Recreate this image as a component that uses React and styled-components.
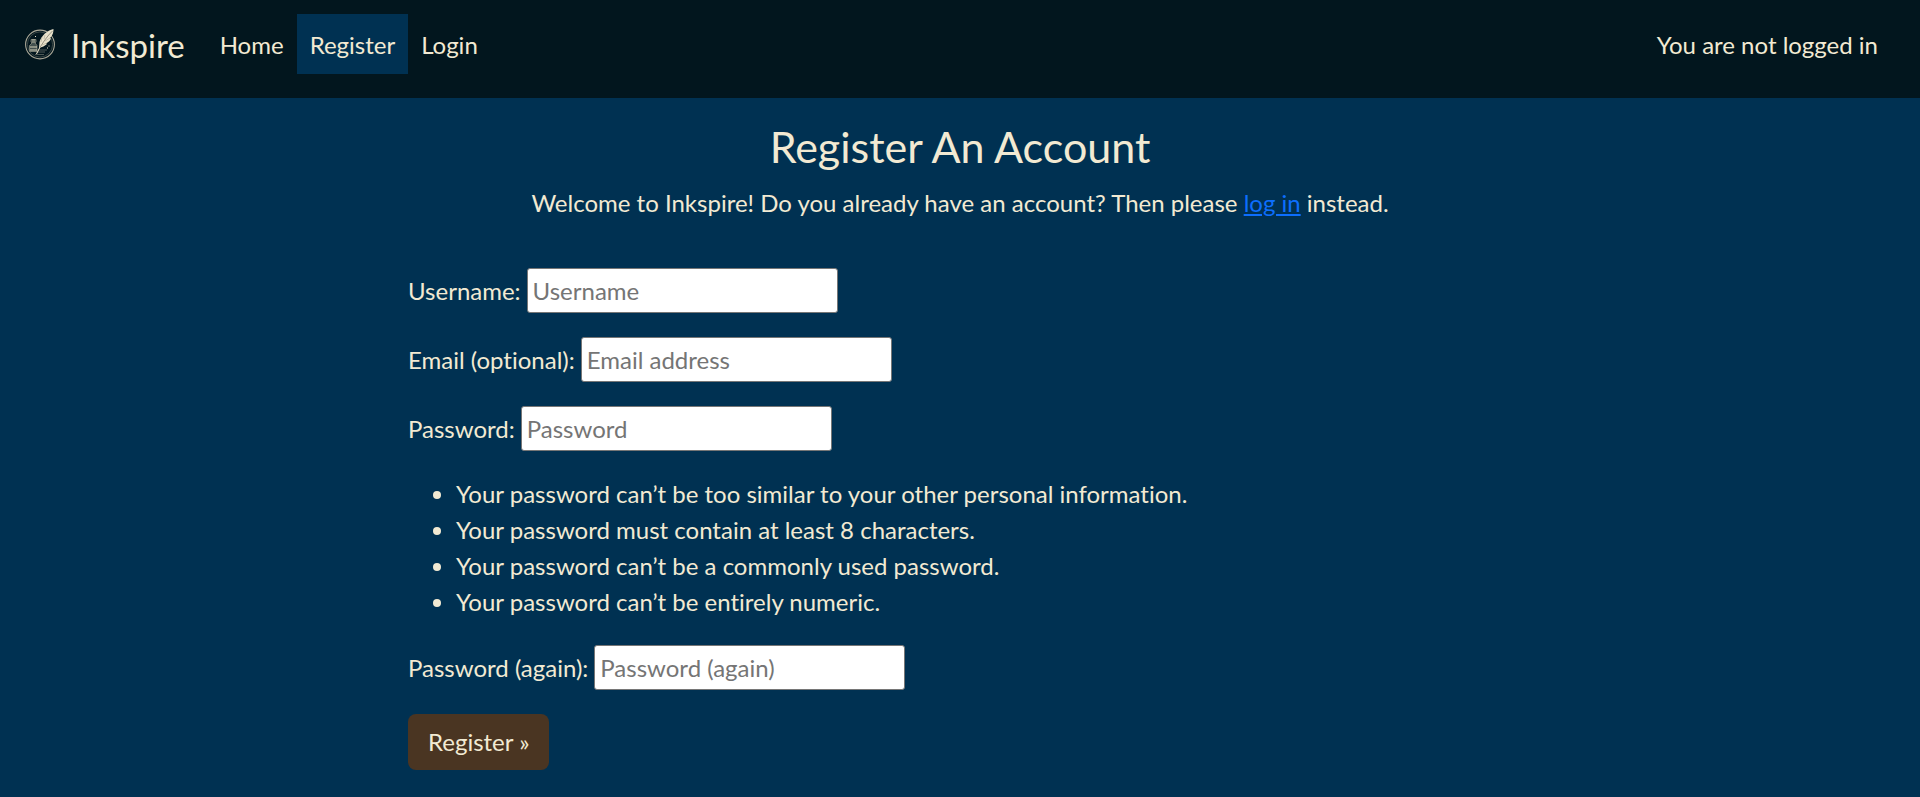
import React from "react";
import styled, { createGlobalStyle } from "styled-components";

const GlobalStyle = createGlobalStyle`
  *, *::before, *::after { box-sizing: border-box; }
  body {
    margin: 0;
    background: #003152;
    color: #f2ead3;
    font-family: Lato, "Liberation Sans", sans-serif;
    font-size: 24px;
    line-height: 36px;
    font-variant-ligatures: none;
  }
`;

const Navbar = styled.header`
  display: flex;
  align-items: flex-start;
  background: #02161e;
  padding: 14px 42px 24px 24px;
`;

const Brand = styled.a`
  display: flex;
  align-items: center;
  gap: 15px;
  height: 60px;
  margin-right: 22px;
  color: inherit;
  text-decoration: none;
  font-size: 33px;
`;

const BrandName = styled.span`
  padding-top: 2px;
`;

const Logo = styled.svg`
  width: 32px;
  height: 32px;
`;

const Nav = styled.nav`
  display: flex;
  flex: 1;
`;

const NavLink = styled.a`
  padding: 13px 13px 11px;
  color: inherit;
  text-decoration: none;
  background: ${(p) => (p.$active ? "#003152" : "transparent")};
`;

const LoginStatus = styled.span`
  padding: 13px 0 11px;
`;

const Main = styled.main`
  max-width: 1104px;
  margin: 0 auto;
  padding: 23px 0;
`;

const Intro = styled.section`
  text-align: center;
  margin-bottom: 47px;
`;

const Title = styled.h1`
  margin: 0 0 12px;
  font-size: 43px;
  line-height: 52px;
  font-weight: 400;
`;

const Text = styled.p`
  margin: 0;
`;

const TextLink = styled.a`
  color: #0d6efd;
`;

const Form = styled.form`
  display: flex;
  flex-direction: column;
  align-items: flex-start;
  gap: 24px;
`;

const Field = styled.div`
  display: flex;
  align-items: center;
  gap: 6px;
`;

const Input = styled.input`
  width: 311px;
  height: 45px;
  padding: 1px 5px;
  border: 1px solid #767676;
  border-radius: 3px;
  background: #fff;
  color: #212529;
  font: inherit;
  &::placeholder { color: #757575; opacity: 1; }
`;

const Rules = styled.ul`
  margin: 0;
  padding: 1px 0 1px 48px;
`;

const SubmitButton = styled.button`
  padding: 10px 20px;
  border: 0;
  border-radius: 8px;
  background: #4a3522;
  color: inherit;
  font: inherit;
`;

const rules = [
  "Your password can’t be too similar to your other personal information.",
  "Your password must contain at least 8 characters.",
  "Your password can’t be a commonly used password.",
  "Your password can’t be entirely numeric.",
];

function QuillLogo() {
  return (
    <Logo viewBox="0 0 32 32" fill="none" aria-hidden="true">
      <circle cx="16" cy="16.500" r="14.400" stroke="#aaa797" strokeWidth="1.100" />
      <circle cx="16" cy="16.500" r="12.600" stroke="#5e665f" strokeWidth=".6" />
      <path d="M7 11.500h5v2.500l-1 1 2 2.500v6H5.500v-6L8 15l-1-1Z" fill="#42504f" stroke="#98998b" strokeWidth=".7" />
      <path d="M6 19h7M6 22h7" stroke="#d4cfb9" strokeWidth="1.200" />
      <path d="M8 12h3M8 14h3" stroke="#d4cfb9" strokeWidth=".8" />
      <path d="M14 22h9M13 24h8M11 26.500h9" stroke="#626b64" strokeWidth=".8" />
      <path d="M29.500 1C23 2.500 17 8 15.500 14L15 20c3-1 6-2 8-4l-1-.5c3-1.500 4-3 5-5l-1-.5c3-3 3.500-6 3.500-9Z" fill="#e9e2cb" />
      <path d="M28.500 3Q21 10 12.500 25.500" stroke="#726f61" strokeWidth=".7" />
      <path d="m16 19-3.500 7" stroke="#eee7d0" strokeWidth="1" />
      <path d="m17 14 1-5m2 2 1-4m-3 10 5-2m-2-2 5-3" stroke="#aaa591" strokeWidth=".6" />
      <path d="M11 8.500h1M24.500 18h1M23 20h1" stroke="#e9e2cb" />
    </Logo>
  );
}

function FormField({ id, label, type = "text", placeholder }) {
  return (
    <Field>
      <label htmlFor={id}>{label}</label>
      <Input id={id} name={id} type={type} placeholder={placeholder} />
    </Field>
  );
}

export default function App() {
  return (
    <>
      <GlobalStyle />
      <Navbar>
        <Brand href="#home">
          <QuillLogo />
          <BrandName>Inkspire</BrandName>
        </Brand>
        <Nav>
          <NavLink href="#home">Home</NavLink>
          <NavLink href="#register" $active aria-current="page">Register</NavLink>
          <NavLink href="#login">Login</NavLink>
        </Nav>
        <LoginStatus>You are not logged in</LoginStatus>
      </Navbar>
      <Main>
        <Intro>
          <Title>Register An Account</Title>
          <Text>
            Welcome to Inkspire! Do you already have an account? Then please{" "}
            <TextLink href="#login">log in</TextLink> instead.
          </Text>
        </Intro>
        <Form onSubmit={(e) => e.preventDefault()}>
          <FormField id="username" label="Username:" placeholder="Username" />
          <FormField id="email" type="email" label="Email (optional):" placeholder="Email address" />
          <FormField id="password1" type="password" label="Password:" placeholder="Password" />
          <Rules>
            {rules.map((rule) => (
              <li key={rule}>{rule}</li>
            ))}
          </Rules>
          <FormField id="password2" type="password" label="Password (again):" placeholder="Password (again)" />
          <SubmitButton type="submit">Register »</SubmitButton>
        </Form>
      </Main>
    </>
  );
}
